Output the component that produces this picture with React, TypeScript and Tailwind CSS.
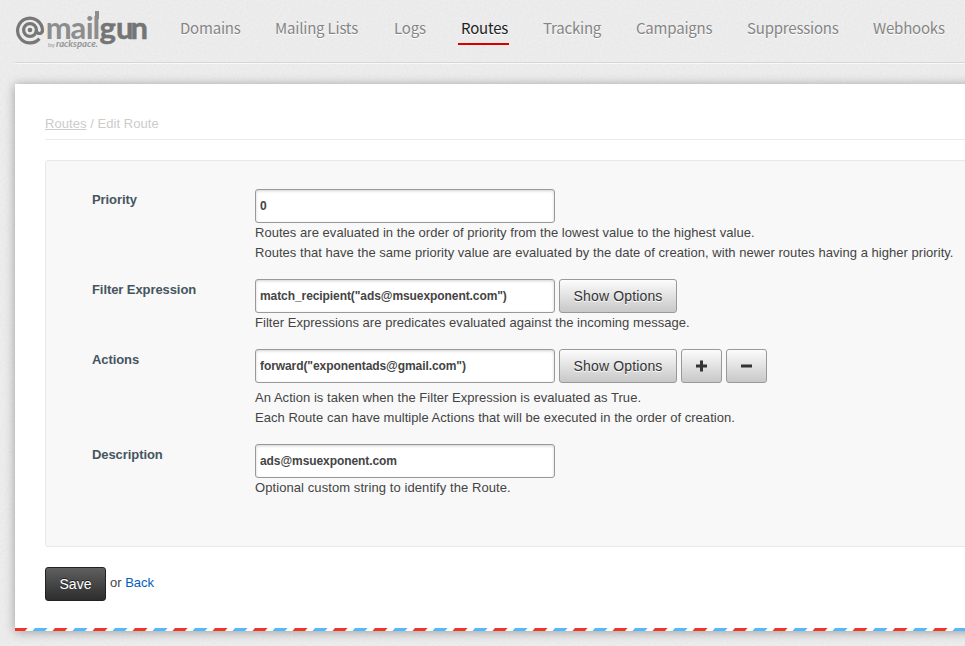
import type { ReactNode } from "react";

const tabs = [
  { label: "Domains", box: "w-[59px] mr-9" },
  { label: "Mailing Lists", box: "w-[83px] mr-9" },
  { label: "Logs", box: "w-[31px] mr-9" },
  { label: "Routes", box: "w-[46px] mr-9", active: true },
  { label: "Tracking", box: "w-[57px] mr-9" },
  { label: "Campaigns", box: "w-[75px] mr-9" },
  { label: "Suppressions", box: "w-[90px] mr-9" },
  { label: "Webhooks", box: "w-[70px]" },
];

function Logo() {
  return (
    <svg width="136" height="46" viewBox="0 0 136 46" className="mt-1 shrink-0">
      <g fill="none" stroke="#777" strokeWidth="3.2">
        <path d="M24.4 34.6A12.4 12.4 0 1 1 27.4 26v1.4a3.2 3.2 0 0 1-6 0V26" />
        <circle cx="15" cy="26" r="6.4" />
      </g>
      <circle cx="15" cy="26" r="2.3" fill="#777" />
      <text x="30.8 55.6 70.8 77.4" y="35" fontFamily="Lato, sans-serif" fontWeight="700" fontSize="31" fill="#8d8d8d">mail</text>
      <rect x="80" y="7" width="4" height="8" fill="#8d8d8d" />
      <text x="84.5 101 115.6" y="35" fontFamily="Lato, sans-serif" fontWeight="700" fontSize="31" stroke="#757575" strokeWidth="0.5" fill="#757575">gun</text>
      <text x="33" y="43" fontFamily="Lato, sans-serif" fontSize="6.5" fill="#999">by</text>
      <text x="41" y="43" fontFamily="Lato, sans-serif" fontWeight="700" fontStyle="italic" fontSize="9" textLength="42" lengthAdjust="spacingAndGlyphs" fill="#969696">rackspace.</text>
    </svg>
  );
}

function Grain() {
  return (
    <svg className="absolute inset-0 size-full opacity-[0.04]" aria-hidden="true">
      <filter id="grain">
        <feTurbulence type="fractalNoise" baseFrequency="0.45" numOctaves="2" />
        <feColorMatrix type="matrix" values="1.2 0 0 0 -0.1  1.2 0 0 0 -0.1  1.2 0 0 0 -0.1  0 0 0 0 1" />
      </filter>
      <rect width="100%" height="100%" filter="url(#grain)" />
    </svg>
  );
}

function Field({ value }: { value: string }) {
  return (
    <input
      readOnly
      value={value}
      className="h-[34px] w-[300px] rounded-[3px] border border-[#999] bg-white px-1 text-[12px] font-bold tracking-[-0.08px] text-[#444] shadow-[inset_0_1px_3px_rgba(0,0,0,0.18)] outline-none"
    />
  );
}

function Button({ children, box }: { children: ReactNode; box: string }) {
  return (
    <button
      className={`flex h-[34px] items-center justify-center rounded-[3px] border border-[#999] bg-linear-to-b from-[#fcfcfc] to-[#c8c8c8] text-[14px] tracking-[0.15px] whitespace-nowrap text-[#333] [text-shadow:0_1px_0_#fff] ${box}`}
    >
      {children}
    </button>
  );
}

function Row({ label, children, box }: { label: string; children: ReactNode; box: string }) {
  return (
    <div className={`flex ${box}`}>
      <div className="w-[163px] shrink-0 pt-px leading-5 font-bold tracking-[-0.08px] text-[#455560]">{label}</div>
      <div className="whitespace-nowrap tracking-[0.035px]">{children}</div>
    </div>
  );
}

function Airmail() {
  return (
    <svg className="block h-[3px] w-full">
      <pattern id="airmail" width="40" height="3" patternUnits="userSpaceOnUse">
        <path d="M0 0h12.5L10 3H-2.5zM40 0h12.5L50 3H37.5z" fill="#f03524" />
        <path d="M20 0h12.5L30 3H17.5z" fill="#54b8fc" />
      </pattern>
      <rect width="100%" height="3" fill="url(#airmail)" />
    </svg>
  );
}

export default function App() {
  return (
    <div className="relative h-[646px] w-[965px] overflow-hidden bg-[#eee] font-['Liberation_Sans',Arial,sans-serif] text-[13px] text-[#444]">
      <Grain />
      <div className="relative pl-[15px]">
        <header className="mb-[21px] flex h-[63px] border-b border-[#d6d6d6] shadow-[0_1px_0_#f8f8f8]">
          <Logo />
          <nav className="ml-[29px] flex pt-3 font-['Noto_Sans_CJK_SC',sans-serif] text-[15px] leading-8 tracking-[-0.2px] text-[#858585] [text-shadow:0_1px_0_#fff]">
            {tabs.map((t) => (
              <div key={t.label} className={`shrink-0 whitespace-nowrap ${t.box}`}>
                {t.active ? (
                  <div className="-ml-[3px] h-[33px] w-[51px] border-b-2 border-[#d80000] pl-[3px] text-[#222]">{t.label}</div>
                ) : (
                  t.label
                )}
              </div>
            ))}
          </nav>
        </header>

        <main className="flex h-[547px] w-[980px] flex-col bg-white shadow-[0_1px_10px_rgba(0,0,0,0.35)]">
          <div className="ml-[30px] grow pt-[30px]">
            <div className="h-[26px] border-b border-[#eaeaea] leading-5 tracking-[0.05px] text-[#ccc]">
              <a className="underline">Routes</a> / Edit Route
            </div>
            <section className="mt-5 h-[387px] rounded-[3px] border border-[#e8e8e8] bg-[#f8f8f8] pt-7 pl-[46px]">
              <Row label="Priority" box="h-[90px]">
                <Field value="0" />
                <p className="leading-5">
                  Routes are evaluated in the order of priority from the lowest value to the highest value.
                  <br />
                  Routes that have the same priority value are evaluated by the date of creation, with newer routes having a higher priority.
                </p>
              </Row>
              <Row label="Filter Expression" box="h-[70px]">
                <div className="flex gap-1">
                  <Field value={'match_recipient("ads@msuexponent.com")'} />
                  <Button box="w-[118px]">Show Options</Button>
                </div>
                <p className="leading-5">Filter Expressions are predicates evaluated against the incoming message.</p>
              </Row>
              <Row label="Actions" box="h-[95px]">
                <div className="mb-[5px] flex gap-1">
                  <Field value={'forward("exponentads@gmail.com")'} />
                  <Button box="w-[118px]">Show Options</Button>
                  <Button box="w-[41px]">
                    <svg width="13" height="12" className="-ml-px"><path d="M6.5 .5v11M1 6h11" stroke="#333" strokeWidth="3" /></svg>
                  </Button>
                  <Button box="w-[41px]">
                    <svg width="13" height="12" className="-ml-px"><path d="M1 6h11" stroke="#333" strokeWidth="3" /></svg>
                  </Button>
                </div>
                <p className="leading-5">
                  An Action is taken when the Filter Expression is evaluated as True.
                  <br />
                  Each Route can have multiple Actions that will be executed in the order of creation.
                </p>
              </Row>
              <Row label="Description" box="h-[60px]">
                <Field value="ads@msuexponent.com" />
                <p className="leading-5 tracking-[0.08px]">Optional custom string to identify the Route.</p>
              </Row>
            </section>
            <div className="mt-5 flex">
              <button className="h-[34px] w-[61px] rounded-[3px] border border-[#222] bg-linear-to-b from-[#606060] to-[#2d2d2d] text-[14px] text-white [text-shadow:0_-1px_0_#222]">
                Save
              </button>
              <span className="ml-1 pt-1.5 leading-5">
                or <a className="text-[#0060c0]">Back</a>
              </span>
            </div>
          </div>
          <Airmail />
        </main>
      </div>
    </div>
  );
}
